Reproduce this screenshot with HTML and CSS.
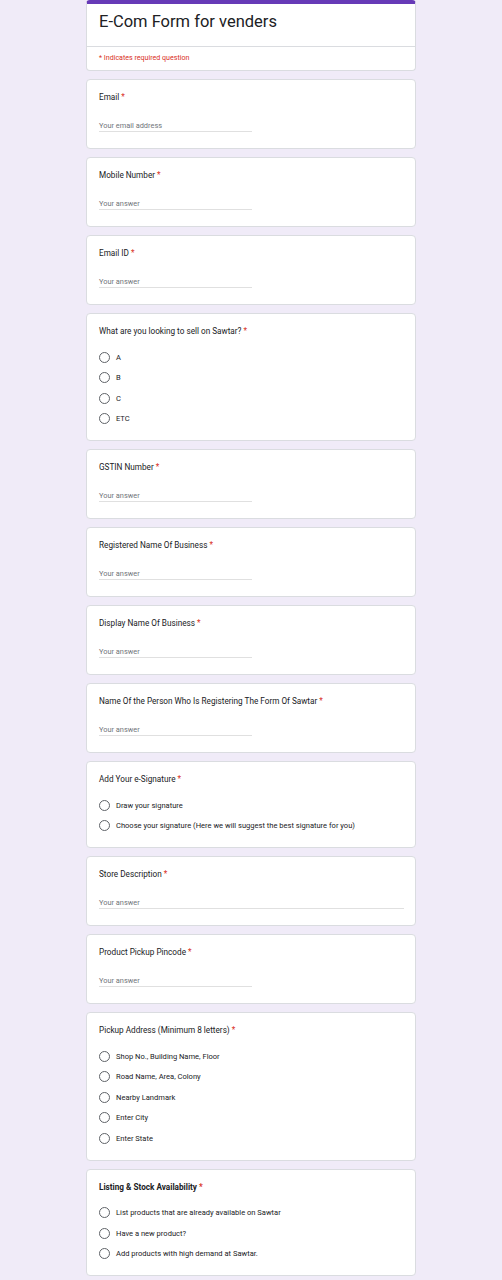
FILE: index.html
```html
<!DOCTYPE html>
<html lang="en">
<head>
<meta charset="utf-8">
<title>E-Com Form for venders</title>
<link rel="stylesheet" href="styles.css">
</head>
<body>
<main class="form">
  <section class="card header">
    <div class="header-top">
      <h1 class="title">E-Com Form for venders</h1>
    </div>
    <div class="header-note"><span class="req">* Indicates required question</span></div>
  </section>

  <section class="card text-q">
    <div class="label">Email <span class="req">*</span></div>
    <div class="input">Your email address</div>
  </section>

  <section class="card text-q">
    <div class="label">Mobile Number <span class="req">*</span></div>
    <div class="input">Your answer</div>
  </section>

  <section class="card text-q">
    <div class="label">Email ID <span class="req">*</span></div>
    <div class="input">Your answer</div>
  </section>

  <section class="card choice-q">
    <div class="label">What are you looking to sell on Sawtar? <span class="req">*</span></div>
    <ul class="options">
      <li class="option"><span class="radio"></span>A</li>
      <li class="option"><span class="radio"></span>B</li>
      <li class="option"><span class="radio"></span>C</li>
      <li class="option"><span class="radio"></span>ETC</li>
    </ul>
  </section>

  <section class="card text-q">
    <div class="label">GSTIN Number <span class="req">*</span></div>
    <div class="input">Your answer</div>
  </section>

  <section class="card text-q">
    <div class="label">Registered Name Of Business <span class="req">*</span></div>
    <div class="input">Your answer</div>
  </section>

  <section class="card text-q">
    <div class="label">Display Name Of Business <span class="req">*</span></div>
    <div class="input">Your answer</div>
  </section>

  <section class="card text-q">
    <div class="label">Name Of the Person Who Is Registering The Form Of Sawtar <span class="req">*</span></div>
    <div class="input">Your answer</div>
  </section>

  <section class="card choice-q">
    <div class="label">Add Your e-Signature <span class="req">*</span></div>
    <ul class="options">
      <li class="option"><span class="radio"></span>Draw your signature</li>
      <li class="option"><span class="radio"></span>Choose your signature (Here we will suggest the best signature for you)</li>
    </ul>
  </section>

  <section class="card text-q">
    <div class="label">Store Description <span class="req">*</span></div>
    <div class="input input-wide">Your answer</div>
  </section>

  <section class="card text-q">
    <div class="label">Product Pickup Pincode <span class="req">*</span></div>
    <div class="input">Your answer</div>
  </section>

  <section class="card choice-q">
    <div class="label">Pickup Address (Minimum 8 letters) <span class="req">*</span></div>
    <ul class="options">
      <li class="option"><span class="radio"></span>Shop No., Building Name, Floor</li>
      <li class="option"><span class="radio"></span>Road Name, Area, Colony</li>
      <li class="option"><span class="radio"></span>Nearby Landmark</li>
      <li class="option"><span class="radio"></span>Enter City</li>
      <li class="option"><span class="radio"></span>Enter State</li>
    </ul>
  </section>

  <section class="card choice-q">
    <div class="label label-bold">Listing &amp; Stock Availability <span class="req">*</span></div>
    <ul class="options">
      <li class="option"><span class="radio"></span>List products that are already available on Sawtar</li>
      <li class="option"><span class="radio"></span>Have a new product?</li>
      <li class="option"><span class="radio"></span>Add products with high demand at Sawtar.</li>
    </ul>
  </section>
</main>
</body>
</html>
```

FILE: styles.css
```css
* {
  box-sizing: border-box;
}

html, body {
  margin: 0;
  padding: 0;
}

body {
  background: #f0ebf8;
  font-family: Roboto, "Liberation Sans", Arial, sans-serif;
  color: #202124;
}

.form {
  width: 330px;
  margin: 0 auto;
  display: flex;
  flex-direction: column;
  gap: 8px;
  padding-bottom: 8px;
}

.card {
  background: #ffffff;
  border: 1px solid #dadce0;
  border-radius: 4px;
}

.header {
  border-top: 4px solid #673ab7;
}

.header-top {
  padding: 8px 12px 14px;
  border-bottom: 1px solid #dadce0;
}

.title {
  margin: 0;
  font-size: 16.5px;
  line-height: 20px;
  font-weight: 400;
  color: #202124;
}

.header-note {
  padding: 6px 12px 7px;
  font-size: 7.1px;
  line-height: 10px;
}

.req {
  color: #d93025;
}

.text-q {
  padding: 11px 12px 16px;
}

.label {
  font-size: 8.2px;
  line-height: 12px;
  color: #202124;
}

.label-bold {
  font-weight: 700;
}

.input {
  margin-top: 18px;
  width: 153px;
  font-size: 7.4px;
  line-height: 10px;
  color: #70757a;
  border-bottom: 1px solid #e0e0e0;
}

.input-wide {
  width: 305px;
}

.choice-q {
  padding: 11px 12px 11px;
}

.options {
  list-style: none;
  margin: 10px 0 0;
  padding: 0;
}

.option {
  display: flex;
  align-items: center;
  height: 20.5px;
  font-size: 7.55px;
  color: #202124;
}

.radio {
  width: 11px;
  height: 11px;
  border: 1px solid #5f6368;
  border-radius: 50%;
  margin-right: 6px;
  flex: none;
}
```
